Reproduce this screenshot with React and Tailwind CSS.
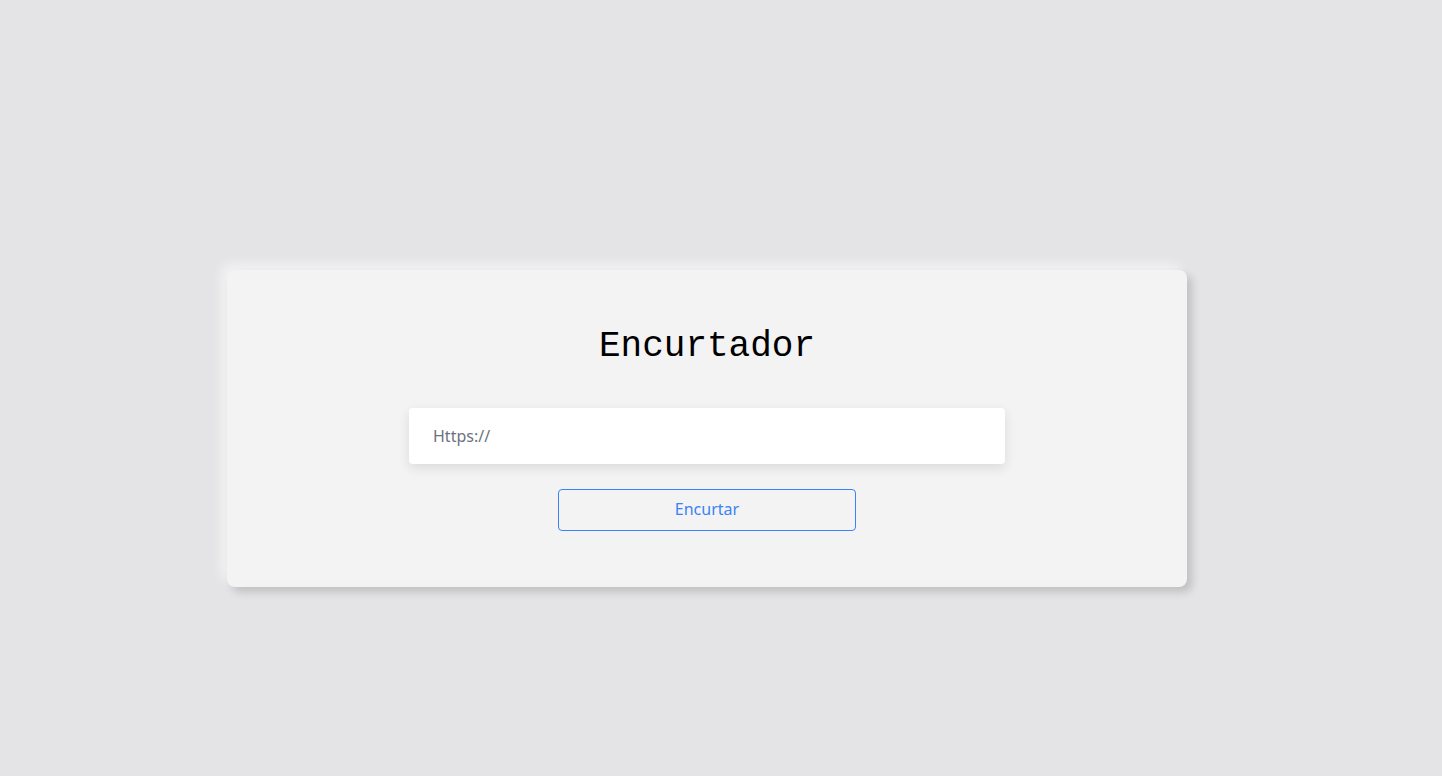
export default function App() {
  return (
    <div className="min-h-screen bg-[#e4e4e6] pt-[270px]">
      <div className="ml-[227px] w-[960px] h-[317px] rounded-lg bg-[#f3f3f3] shadow-[5px_5px_8px_rgba(0,0,0,0.16),-6px_-6px_12px_rgba(255,255,255,0.55)] flex flex-col items-center pt-[57px]">
        <h1 className="text-[36px] leading-10 text-black font-['Liberation_Mono',monospace]">Encurtador</h1>
        <input
          type="text"
          placeholder="Https://"
          className="mt-[41px] w-[596px] h-[56px] rounded bg-white px-6 text-base text-gray-700 placeholder:text-[#6b7280] shadow-[0_4px_12px_rgba(0,0,0,0.1)] outline-none font-['Noto_Sans',sans-serif]"
        />
        <button className="mt-[25px] w-[298px] h-[42px] rounded border border-[#3b82f6] text-[#3b82f6] text-base leading-5 pb-[2px] font-['Noto_Sans',sans-serif]">
          Encurtar
        </button>
      </div>
    </div>
  );
}
